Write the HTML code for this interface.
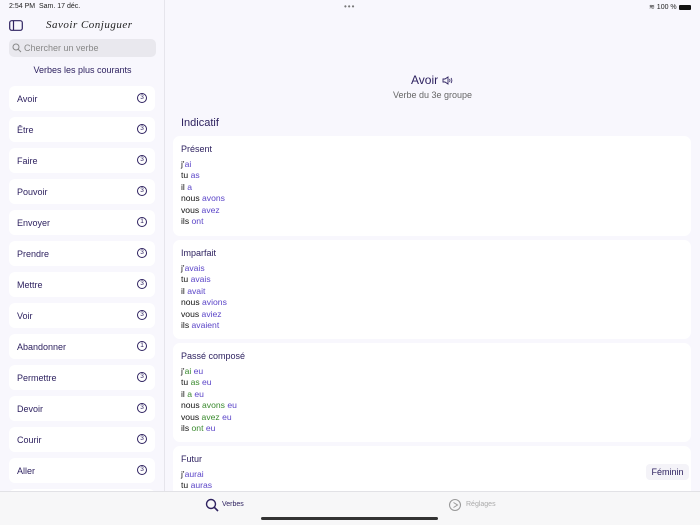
<!DOCTYPE html>
<html><head><meta charset="utf-8"><style>
*{margin:0;padding:0;box-sizing:border-box}
body{width:700px;height:525px;overflow:hidden;background:#f8f7fd;font-family:"Liberation Sans",sans-serif;position:relative;color:#111}
.side{position:absolute;left:0;top:0;width:165px;height:525px;border-right:1px solid #e6e5ec;background:#f8f7fd}
.st{position:absolute;font-size:7px;top:3px;color:#222}
.row{position:absolute;left:9px;width:146px;height:25px;background:#fff;border-radius:6px;font-size:9px;color:#2e2260;padding:8px 0 0 8px}
.row i{position:absolute;right:8px;top:7px;width:10px;height:10px;border:1px solid #2e2260;border-radius:50%;font-style:normal;font-size:6.5px;text-align:center;line-height:8px}
.card{position:absolute;left:173px;width:518px;background:#fff;border-radius:7px;padding:8px 8px;font-size:8.6px;line-height:11.5px}
.card h4{font-weight:normal;color:#2e2260;font-size:9px;margin-bottom:3px}
.v{color:#5b45c8}.g{color:#3a8a2e}
</style></head><body>
<div class="side">
<div class="st" style="left:9px">2:54 PM &nbsp;Sam. 17 déc.</div>
<svg style="position:absolute;left:9px;top:20px" width="14" height="11"><rect x="0.7" y="0.7" width="12.6" height="9.6" rx="2" fill="none" stroke="#2e2260" stroke-width="1.2"/><line x1="4.5" y1="1" x2="4.5" y2="10" stroke="#2e2260" stroke-width="1.2"/></svg>
<div style="position:absolute;left:46px;top:19px;font-family:'Liberation Serif',serif;font-style:italic;font-size:11px;color:#222;letter-spacing:.5px">Savoir Conjuguer</div>
<div style="position:absolute;left:9px;top:39px;width:147px;height:18px;background:#e9e8ee;border-radius:5px;font-size:9px;color:#888;padding:4px 0 0 15px">Chercher un verbe</div>
<svg style="position:absolute;left:12px;top:43px" width="10" height="10"><circle cx="4" cy="4" r="3" fill="none" stroke="#888" stroke-width="1"/><line x1="6.2" y1="6.2" x2="9" y2="9" stroke="#888"/></svg>
<div style="position:absolute;left:0;width:165px;top:65px;text-align:center;font-size:9px;color:#2e2260">Verbes les plus courants</div>
<div class="row" style="top:86px">Avoir<i>3</i></div>
<div class="row" style="top:117px">Être<i>3</i></div>
<div class="row" style="top:148px">Faire<i>3</i></div>
<div class="row" style="top:179px">Pouvoir<i>3</i></div>
<div class="row" style="top:210px">Envoyer<i>1</i></div>
<div class="row" style="top:241px">Prendre<i>3</i></div>
<div class="row" style="top:272px">Mettre<i>3</i></div>
<div class="row" style="top:303px">Voir<i>3</i></div>
<div class="row" style="top:334px">Abandonner<i>1</i></div>
<div class="row" style="top:365px">Permettre<i>3</i></div>
<div class="row" style="top:396px">Devoir<i>3</i></div>
<div class="row" style="top:427px">Courir<i>3</i></div>
<div class="row" style="top:458px">Aller<i>3</i></div>
<div class="row" style="top:489px"></div>
</div>
<div style="position:absolute;left:344px;top:2px;font-size:8px;color:#777;letter-spacing:1px">•••</div>
<div class="st" style="left:649px">&#8779; 100 % <span style="display:inline-block;width:12px;height:5px;background:#111;border-radius:1px;vertical-align:middle"></span></div>
<div style="position:absolute;left:411px;top:73px;font-size:12px;color:#2e2260">Avoir</div>
<svg style="position:absolute;left:442px;top:76px" width="11" height="9"><path d="M1 3 H3 L6 1 V8 L3 6 H1 Z" fill="none" stroke="#2e2260" stroke-width="0.9"/><path d="M7.5 3 Q8.5 4.5 7.5 6 M9 2 Q10.8 4.5 9 7" fill="none" stroke="#2e2260" stroke-width="0.8"/></svg>
<div style="position:absolute;left:165px;width:535px;top:90px;text-align:center;font-size:9px;color:#666">Verbe du 3e groupe</div>
<div style="position:absolute;left:181px;top:117px;font-size:11px;color:#2e2260">Indicatif</div>
<div class="card" style="top:136px;height:100px"><h4>Présent</h4>j'<span class="v">ai</span><br>tu <span class="v">as</span><br>il <span class="v">a</span><br>nous <span class="v">avons</span><br>vous <span class="v">avez</span><br>ils <span class="v">ont</span></div>
<div class="card" style="top:240px;height:99px"><h4>Imparfait</h4>j'<span class="v">avais</span><br>tu <span class="v">avais</span><br>il <span class="v">avait</span><br>nous <span class="v">avions</span><br>vous <span class="v">aviez</span><br>ils <span class="v">avaient</span></div>
<div class="card" style="top:343px;height:99px"><h4>Passé composé</h4>j'<span class="g">ai</span> <span class="v">eu</span><br>tu <span class="g">as</span> <span class="v">eu</span><br>il <span class="g">a</span> <span class="v">eu</span><br>nous <span class="g">avons</span> <span class="v">eu</span><br>vous <span class="g">avez</span> <span class="v">eu</span><br>ils <span class="g">ont</span> <span class="v">eu</span></div>
<div class="card" style="top:446px;height:60px"><h4>Futur</h4>j'<span class="v">aurai</span><br>tu <span class="v">auras</span></div>
<div style="position:absolute;left:646px;top:464px;width:43px;height:16px;background:#f4f3f8;border-radius:4px;font-size:9px;color:#2e2260;text-align:center;line-height:16px">Féminin</div>
<div style="position:absolute;left:0;top:491px;width:700px;height:34px;background:#f7f7f8;border-top:1px solid #e2e2e6"></div>
<svg style="position:absolute;left:205px;top:498px" width="14" height="14"><circle cx="6" cy="6" r="4.5" fill="none" stroke="#2e2260" stroke-width="1.4"/><line x1="9.3" y1="9.3" x2="13" y2="13" stroke="#2e2260" stroke-width="1.6"/></svg>
<div style="position:absolute;left:222px;top:501px;font-size:7px;color:#2e2260">Verbes</div>
<svg style="position:absolute;left:448px;top:498px" width="14" height="14"><circle cx="7" cy="7" r="5.5" fill="none" stroke="#999" stroke-width="1.1"/><path d="M5.5 4.5 L9.5 7 L5.5 9.5" fill="none" stroke="#999"/></svg>
<div style="position:absolute;left:466px;top:501px;font-size:7px;color:#aaa">Réglages</div>
<div style="position:absolute;left:261px;top:517px;width:177px;height:3px;background:#333;border-radius:2px"></div>
</body></html>
